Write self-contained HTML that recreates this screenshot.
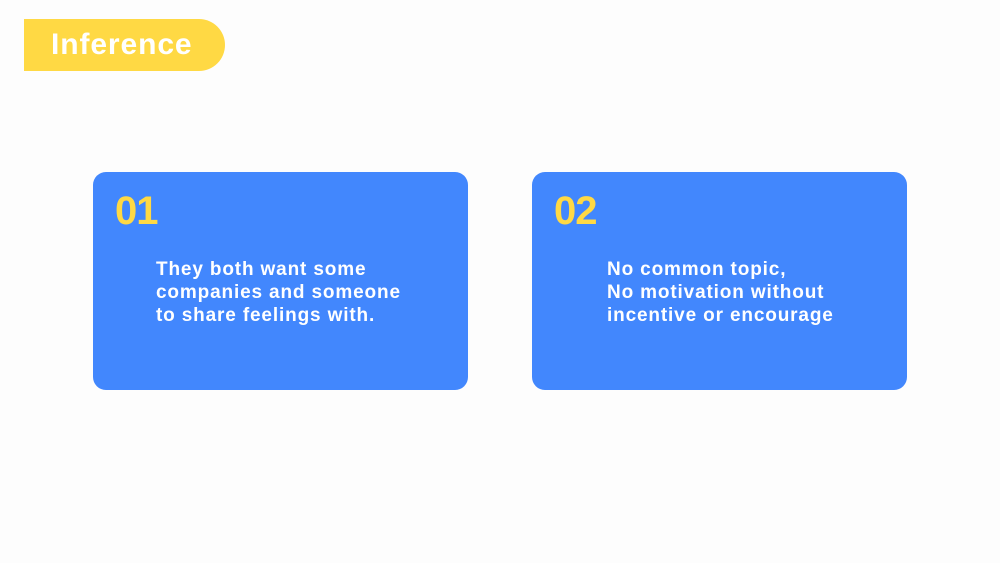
<!DOCTYPE html>
<html><head><style>
body{margin:0;width:1000px;height:563px;background:#fdfdfd;position:relative;overflow:hidden;font-family:"Liberation Sans",sans-serif;}
.pill{position:absolute;left:24px;top:19px;width:201px;height:52px;background:#ffd944;border-radius:0 26px 26px 0;}
.pill span{position:absolute;left:27px;top:9px;color:#fff;font-weight:bold;font-size:30px;letter-spacing:0.9px}
.card{position:absolute;top:172px;width:375px;height:218px;background:#4287fd;border-radius:13px;}
.num{position:absolute;left:22px;top:17px;color:#ffd944;font-weight:bold;font-size:40px;letter-spacing:-1px}
.txt{position:absolute;top:86px;color:#fff;font-weight:bold;font-size:19px;line-height:23px;letter-spacing:0.85px;white-space:nowrap}
</style></head><body>
<div class="pill"><span>Inference</span></div>
<div class="card" style="left:93px"><div class="num">01</div><div class="txt" style="left:63px">They both want some<br>companies and someone<br>to share feelings with.</div></div>
<div class="card" style="left:532px"><div class="num">02</div><div class="txt" style="left:75px">No common topic,<br>No motivation without<br>incentive or encourage</div></div>
</body></html>
